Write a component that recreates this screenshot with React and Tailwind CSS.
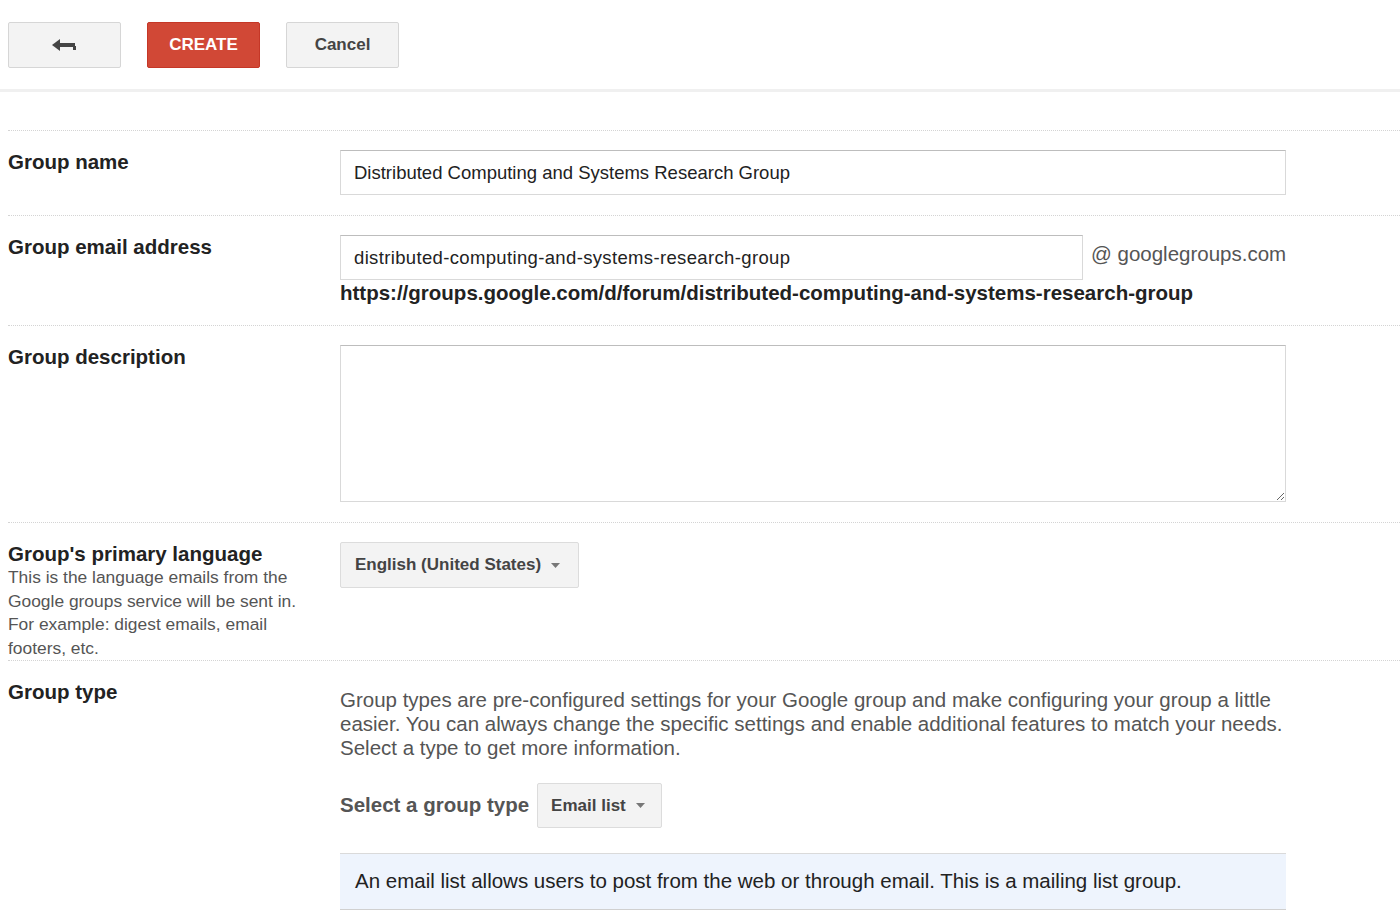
import React from "react";

function Caret() {
  return (
    <svg width="9" height="5" viewBox="0 0 9 5" className="ml-[10px]">
      <polygon points="0,0 9,0 4.5,5" fill="#777" />
    </svg>
  );
}

function BackIcon() {
  return (
    <svg width="26" height="14" viewBox="0 0 26 14">
      <polygon points="0,7 8,1 8,13" fill="#444" />
      <rect x="8" y="5" width="15" height="4" fill="#444" />
      <rect x="21" y="8" width="3" height="4" fill="#444" />
    </svg>
  );
}

function Row({ label, children, className = "" }) {
  return (
    <div className={"flex border-b border-dotted border-[#d4d4d4] pt-[19px] " + className}>
      <div className="w-[332px] shrink-0">{label}</div>
      <div className="w-[946px]">{children}</div>
    </div>
  );
}

const labelCls = "text-[20.5px] leading-[24px] font-bold text-[#222]";

export default function App() {
  return (
    <div className="w-[1400px] h-[922px] overflow-hidden bg-white font-['Liberation_Sans',Arial,sans-serif]">
      <div className="flex gap-[26px] pl-2 pt-[22px] h-[89px]">
        <button className="w-[113px] h-[46px] flex items-center justify-center rounded-[2px] border border-[#d6d6d6] bg-[#f3f3f3]">
          <BackIcon />
        </button>
        <button className="w-[113px] h-[46px] flex items-center justify-center rounded-[2px] border border-[#c53727] bg-[#d14836] text-white font-bold text-[17px]">
          CREATE
        </button>
        <button className="w-[113px] h-[46px] flex items-center justify-center rounded-[2px] border border-[#d6d6d6] bg-[#f3f3f3] text-[#444] font-bold text-[17px]">
          Cancel
        </button>
      </div>
      <div className="h-[3px] bg-[#f0f0f0]" />
      <div className="h-[38px]" />
      <div className="ml-2 border-t border-dotted border-[#d4d4d4]">
        <Row label={<div className={labelCls}>Group name</div>} className="pb-5">
          <input
            readOnly
            defaultValue="Distributed Computing and Systems Research Group"
            className="w-[946px] h-[45px] px-[13px] border border-[#d9d9d9] border-t-[#bdbdbd] text-[18.5px] text-[#222] outline-none"
          />
        </Row>
        <Row label={<div className={labelCls}>Group email address</div>} className="pb-5">
          <div className="flex items-start">
            <input
              readOnly
              defaultValue="distributed-computing-and-systems-research-group"
              className="w-[743px] shrink-0 h-[45px] px-[13px] border border-[#d9d9d9] border-t-[#bdbdbd] text-[18.5px] tracking-[0.35px] text-[#222] outline-none"
            />
            <span className="ml-[8px] mt-[7px] shrink-0 whitespace-nowrap text-[20.5px] leading-[24px] text-[#555]">@ googlegroups.com</span>
          </div>
          <div className="text-[20.5px] leading-[24px] font-bold text-[#222] mt-[1px] whitespace-nowrap">
            https://groups.google.com/d/forum/distributed-computing-and-systems-research-group
          </div>
        </Row>
        <Row label={<div className={labelCls}>Group description</div>} className="pb-5">
          <textarea className="block w-[946px] h-[157px] border border-[#d9d9d9] border-t-[#bdbdbd] outline-none resize" />
        </Row>
        <Row
          label={
            <div>
              <div className={labelCls}>Group's primary language</div>
              <div className="text-[17.4px] leading-[23.5px] text-[#555]">
                This is the language emails from the
                <br />
                Google groups service will be sent in.
                <br />
                For example: digest emails, email
                <br />
                footers, etc.
              </div>
            </div>
          }
          className="pb-0"
        >
          <button className="h-[46px] w-[239px] flex items-center pl-[14px] rounded-[2px] border border-[#dcdcdc] bg-[#f3f3f3] text-[17px] font-bold text-[#444]">
            English (United States)
            <Caret />
          </button>
        </Row>
        <Row label={<div className={labelCls}>Group type</div>} className="pb-5 border-b-0">
          <p className="mt-2 text-[20.5px] leading-[24px] text-[#555] whitespace-nowrap">
            Group types are pre-configured settings for your Google group and make configuring your group a little
            <br />
            easier. You can always change the specific settings and enable additional features to match your needs.
            <br />
            Select a type to get more information.
          </p>
          <div className="mt-[23px] flex items-center">
            <span className="text-[20.5px] font-bold text-[#555]">Select a group type</span>
            <button className="ml-2 h-[45px] w-[125px] flex items-center pl-[13px] rounded-[2px] border border-[#dcdcdc] bg-[#f3f3f3] text-[17px] font-bold text-[#444]">
              Email list
              <Caret />
            </button>
          </div>
          <div className="mt-[25px] h-[57px] flex items-center pl-[15px] bg-[#eef4fd] border-t border-[#dadada] border-b border-b-[#d0d0d0] text-[20.5px] text-[#222]">
            An email list allows users to post from the web or through email. This is a mailing list group.
          </div>
        </Row>
      </div>
    </div>
  );
}
